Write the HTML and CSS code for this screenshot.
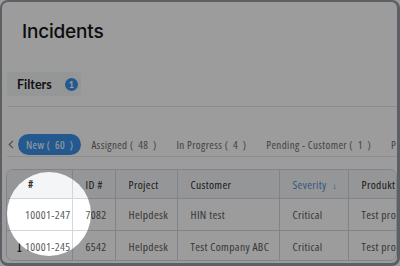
FILE: index.html
```html
<!DOCTYPE html>
<html>
<head>
<meta charset="utf-8">
<link rel="stylesheet" href="styles.css">
</head>
<body>
<div class="window">
  <h1 class="title">Incidents</h1>
  <div class="filters"><span>Filters</span><span class="badge">1</span></div>
  <div class="rule"></div>
  <div class="tabs">
    <svg class="chev" width="6" height="9" viewBox="0 0 6 9"><path d="M5 0.8L1.2 4.5L5 8.2" stroke="#777" stroke-width="1.1" fill="none"/></svg>
    <span class="tab active">New ( &nbsp;60 &nbsp;)</span>
    <span class="tab">Assigned ( &nbsp;48 &nbsp;)</span>
    <span class="tab">In Progress ( &nbsp;4 &nbsp;)</span>
    <span class="tab">Pending - Customer ( &nbsp;1 &nbsp;)</span>
    <span class="tab">P</span>
  </div>
  <div class="rule"></div>
  <div class="tablewrap">
    <table class="grid">
      <colgroup>
        <col class="c1"><col class="c2"><col class="c3"><col class="c4"><col class="c5"><col class="c6">
      </colgroup>
      <thead>
        <tr><th class="num">#</th><th>ID #</th><th>Project</th><th>Customer</th><th class="sorted">Severity <span class="arrow">&darr;</span></th><th>Produkt</th></tr>
      </thead>
      <tbody>
        <tr><td class="num"><span class="slot"></span>10001-247</td><td>7082</td><td>Helpdesk</td><td>HIN test</td><td>Critical</td><td>Test product</td></tr>
        <tr><td class="num"><span class="slot"><svg width="5" height="9" viewBox="0 0 5 9"><path d="M2.5 0.5V8M0.5 8.5H4.5" stroke="#333" stroke-width="1.4" fill="none"/></svg></span>10001-245</td><td>6542</td><td>Helpdesk</td><td>Test Company ABC</td><td>Critical</td><td>Test product</td></tr>
        <tr><td class="num"></td><td></td><td></td><td></td><td></td><td></td></tr>
      </tbody>
    </table>
  </div>
</div>
<div class="spotlight"></div>
</body>
</html>
```
FILE: styles.css
```css
html, body {
  margin: 0;
  padding: 0;
  background: #ffffff;
  width: 400px;
  height: 266px;
  overflow: hidden;
}
body {
  font-family: Lato, "Open Sans", sans-serif;
  position: relative;
}
.window {
  box-sizing: border-box;
  width: 400px;
  height: 266px;
  border: 2px solid #979ca4;
  border-right-width: 3px;
  border-bottom-width: 3px;
  border-radius: 8px;
  background: #ffffff;
  overflow: hidden;
  display: flex;
  flex-direction: column;
}
.title {
  margin: 18px 0 0 20px;
  font-family: Inter, sans-serif;
  font-size: 19px;
  line-height: 24px;
  font-weight: 500;
  letter-spacing: -0.2px;
  color: #161616;
}
.filters {
  margin: 28px 0 0 5px;
  width: 74px;
  height: 24px;
  box-sizing: border-box;
  padding-left: 10px;
  background: #f4f5f6;
  border-radius: 3px;
  display: flex;
  align-items: center;
  gap: 13px;
  font-size: 12.5px;
  font-weight: 700;
  color: #1e2024;
}
.badge {
  width: 13px;
  height: 13px;
  border-radius: 50%;
  background: #3b92ec;
  color: #fff;
  font-size: 9px;
  font-weight: 700;
  display: flex;
  align-items: center;
  justify-content: center;
}
.rule {
  margin: 10px 0 0 5px;
  height: 1px;
  background: #e4e6e8;
}
.tabs {
  margin-top: 27px;
  margin-left: 6px;
  height: 21px;
  display: flex;
  align-items: center;
  white-space: nowrap;
  font-family: "Open Sans", sans-serif;
  font-stretch: 75%;
  font-size: 11px;
  letter-spacing: 0.35px;
  color: #6e6e6e;
}
.tabs > * { flex-shrink: 0; }
.tabs + .rule {
  margin-top: 1px;
}
.chev {
  display: block;
  margin-right: 4px;
}
.tab {
  padding: 0 10px;
  height: 21px;
  line-height: 21px;
}
.tab.active {
  background: #3b92ec;
  color: #fff;
  border-radius: 11px;
  padding: 0 8px;
}
.tablewrap {
  margin: 12px 0 0 4px;
  height: 90px;
  border: 1px solid #d3d7db;
  border-radius: 7px;
  overflow: hidden;
}
.grid {
  border-collapse: collapse;
  table-layout: fixed;
  width: 420px;
  font-family: "Open Sans", sans-serif;
  font-stretch: 75%;
  font-size: 11.5px;
  letter-spacing: 0.35px;
  color: #5a5a5a;
}
.c1 { width: 65px; }
.c2 { width: 43px; }
.c3 { width: 62px; }
.c4 { width: 102px; }
.c5 { width: 69px; }
.c6 { width: 79px; }
.grid th, .grid td {
  border: 1px solid #d3d7db;
  padding: 0 0 0 13px;
  text-align: left;
  white-space: nowrap;
  overflow: hidden;
}
.grid tr:first-child th { border-top: none; }
.grid tr th:first-child, .grid tr td:first-child { border-left: none; }
.grid th {
  height: 28px;
  background: #f3f5f7;
  font-weight: 400;
  color: #2e2e2e;
}
.grid td { height: 31px; }
.grid th.num { padding-left: 21px; font-weight: 700; font-size: 10px; }
.grid td.num { padding-left: 10px; }
.slot {
  display: inline-block;
  width: 8px;
  vertical-align: middle;
}
.slot svg { display: block; }
.sorted { color: #5a90d0 !important; }
.arrow { font-size: 9px; margin-left: 3px; }
.spotlight {
  position: absolute;
  left: 7px;
  top: 172px;
  width: 84px;
  height: 84px;
  border-radius: 50%;
  box-shadow: 0 0 0 700px rgba(0, 0, 0, 0.39);
  pointer-events: none;
}
```
